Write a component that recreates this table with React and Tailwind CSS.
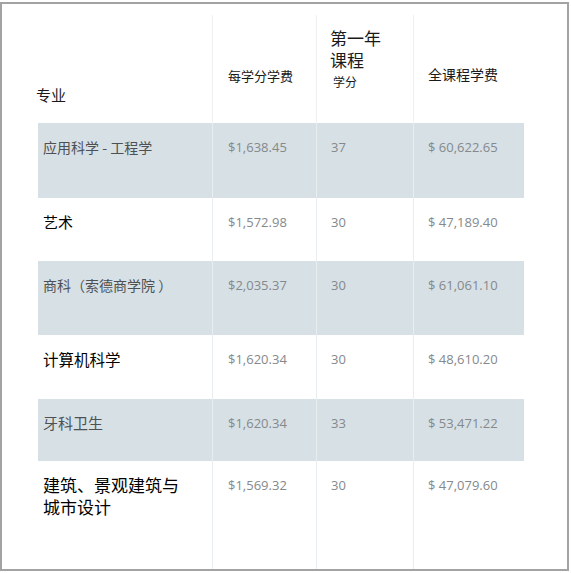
import React from "react";

const cjk = { fontFamily: '"Noto Sans CJK SC", "Noto Sans", sans-serif' };
const num = { fontFamily: '"Open Sans", "Liberation Sans", sans-serif' };

const rows = [
  { name: ["应用科学 - 工程学"], price: "$1,638.45", cr: "37", total: "$ 60,622.65", gray: true, h: "h-[75px]", size: "text-[14px]" },
  { name: ["艺术"], price: "$1,572.98", cr: "30", total: "$ 47,189.40", gray: false, h: "h-[63px]", size: "text-[15px]" },
  { name: ["商科（索德商学院 ）"], price: "$2,035.37", cr: "30", total: "$ 61,061.10", gray: true, h: "h-[74px]", size: "text-[14px]" },
  { name: ["计算机科学"], price: "$1,620.34", cr: "30", total: "$ 48,610.20", gray: false, h: "h-[64px]", size: "text-[15.5px]" },
  { name: ["牙科卫生"], price: "$1,620.34", cr: "33", total: "$ 53,471.22", gray: true, h: "h-[62px]", size: "text-[15px]" },
  { name: ["建筑、景观建筑与", "城市设计"], price: "$1,569.32", cr: "30", total: "$ 47,079.60", gray: false, h: "flex-1", size: "text-[17px]" },
];

function Row({ r }) {
  const bg = r.gray ? "bg-[#d7e0e5]" : "bg-white";
  const nameColor = r.gray ? "text-[#4d5154]" : "text-[#000000]";
  const numColor = "text-[#85898c]";
  return (
    <div className={`grid grid-cols-[174px_104px_97px_111px] ${r.h}`}>
      <div className={`${bg} pl-[5px] pt-[13px]`}>
        {r.name.map((n, i) => (
          <div key={i} className={`${r.size} ${nameColor} leading-[22px]`} style={cjk}>
            {n}
          </div>
        ))}
      </div>
      <div className={`${bg} border-l border-[#e8edf0] pl-[15px] pt-[14px]`}>
        <div className={`text-[13px] leading-[20px] ${numColor}`} style={num}>{r.price}</div>
      </div>
      <div className={`${bg} border-l border-[#e8edf0] pl-[14px] pt-[14px]`}>
        <div className={`text-[13px] leading-[20px] ${numColor}`} style={num}>{r.cr}</div>
      </div>
      <div className={`${bg} border-l border-[#e8edf0] pl-[14px] pt-[14px]`}>
        <div className={`text-[13px] leading-[20px] ${numColor}`} style={num}>{r.total}</div>
      </div>
    </div>
  );
}

export default function App() {
  return (
    <div className="w-[571px] h-[573px] bg-white pt-[2px] pr-[2px] pb-[2px] flex">
      <div className="flex-1 border-2 border-[#a3a3a3] flex flex-col pt-[11px] pl-[36px]">
        <div className="grid grid-cols-[174px_104px_97px_111px] h-[108px]">
          <div className="pt-[70px] -ml-[2px]">
            <div className="text-[15px] leading-[20px] text-[#1a1a1a]" style={cjk}>专业</div>
          </div>
          <div className="border-l border-[#eef0f2] pl-[15px] pt-[51px]">
            <div className="text-[13px] leading-[20px] text-[#1a1a1a]" style={cjk}>每学分学费</div>
          </div>
          <div className="border-l border-[#eef0f2] pl-[13px] pt-[12px]">
            <div className="text-[17px] leading-[22px] text-[#1a1a1a]" style={cjk}>第一年</div>
            <div className="text-[17px] leading-[22px] text-[#1a1a1a]" style={cjk}>课程</div>
            <div className="text-[12px] leading-[16px] mt-[3px] pl-[3px] text-[#1a1a1a]" style={cjk}>学分</div>
          </div>
          <div className="border-l border-[#eef0f2] pl-[14px] pt-[49px]">
            <div className="text-[14px] leading-[20px] text-[#1a1a1a]" style={cjk}>全课程学费</div>
          </div>
        </div>
        <div className="flex flex-col flex-1">
          {rows.map((r, i) => (
            <Row key={i} r={r} />
          ))}
        </div>
      </div>
    </div>
  );
}
